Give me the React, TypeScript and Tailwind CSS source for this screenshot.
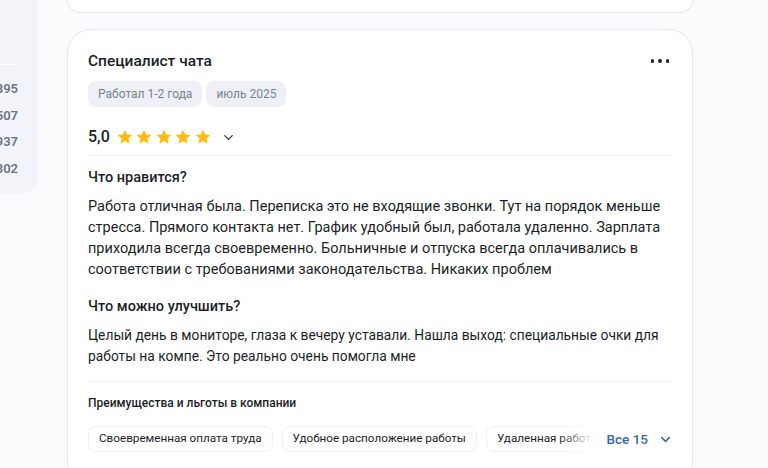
import { ChevronDown } from "lucide-react";

const stats = ["895", "507", "937", "302"];
const benefits = [
  "Своевременная оплата труда",
  "Удобное расположение работы",
  "Удаленная работа",
];

function Star() {
  return (
    <svg width="18" height="18" viewBox="0 0 24 24" className="shrink-0">
      <path
        d="M12 2.2l2.9 6.6 7.1.6-5.4 4.7 1.6 7-6.2-3.7-6.2 3.7 1.6-7L2 9.4l7.1-.6z"
        fill="#ffbc0a"
      />
    </svg>
  );
}

export default function App() {
  return (
    <div
      className="flex w-[768px] h-[468px] overflow-hidden bg-[#fafbfc] text-[#1c1f26]"
      style={{ fontFamily: "Roboto, 'Noto Sans', sans-serif" }}
    >
      {/* left sidebar, cut by the viewport */}
      <div className="w-[38px] shrink-0 self-start h-[194px] bg-[#f3f4f9] rounded-br-[16px] flex flex-col items-end pr-[20px]">
        <div className="mt-[64px] w-full h-px bg-white" />
        <div className="mt-[14px] flex flex-col gap-[7.7px]">
          {stats.map((s) => (
            <span key={s} className="text-[13px] leading-[19px] font-semibold text-[#6b7384]">
              {s}
            </span>
          ))}
        </div>
      </div>

      <div className="ml-[29px] w-[626px] shrink-0 flex flex-col gap-[16px]">
        {/* bottom of previous card */}
        <div className="shrink-0 h-[13px] bg-white border border-t-0 border-[#e5e8f0] rounded-b-[24px]" />

        {/* review card */}
        <div className="shrink-0 bg-white border border-[#e5e8f0] rounded-[24px] pl-[20px] pr-[19px] pt-[19px] pb-8">
          <div className="flex items-center justify-between">
            <h2 className="text-[15.5px] leading-[24px] font-medium">Специалист чата</h2>
            <div className="flex gap-[4px] mr-[4px]">
              <span className="w-[3.5px] h-[3.5px] rounded-full bg-[#1c1f26]" />
              <span className="w-[3.5px] h-[3.5px] rounded-full bg-[#1c1f26]" />
              <span className="w-[3.5px] h-[3.5px] rounded-full bg-[#1c1f26]" />
            </div>
          </div>

          <div className="mt-[8px] flex gap-[4px]">
            <span className="h-[26px] px-[10px] flex items-center rounded-[8px] bg-[#eef0f6] text-[12px] text-[#7a8190]">
              Работал 1-2 года
            </span>
            <span className="h-[26px] px-[10px] flex items-center rounded-[8px] bg-[#eef0f6] text-[12px] text-[#7a8190]">
              июль 2025
            </span>
          </div>

          <div className="mt-[18px] h-[24px] flex items-center">
            <span className="text-[16px] font-medium mr-[6px]">5,0</span>
            <div className="flex gap-[1.5px]">
              <Star />
              <Star />
              <Star />
              <Star />
              <Star />
            </div>
            <ChevronDown size={15} strokeWidth={2.2} className="ml-[9px] text-[#3a3f4a]" />
          </div>

          <div className="mt-[6px] h-px bg-[#eef0f4]" />

          <h3 className="mt-[12px] text-[14.5px] leading-[20px] font-medium">Что нравится?</h3>
          <p className="mt-[8px] text-[14.5px] leading-[21px]">
            Работа отличная была. Переписка это не входящие звонки. Тут на порядок меньше стресса.
            Прямого контакта нет. График удобный был, работала удаленно. Зарплата приходила всегда
            своевременно. Больничные и отпуска всегда оплачивались в соответствии с требованиями
            законодательства. Никаких проблем
          </p>

          <h3 className="mt-[17px] text-[14.5px] leading-[20px] font-medium">Что можно улучшить?</h3>
          <p className="mt-[8px] text-[13.8px] leading-[21px]">
            Целый день в мониторе, глаза к вечеру уставали. Нашла выход: специальные очки для
            работы на компе. Это реально очень помогла мне
          </p>

          <div className="mt-[14px] h-px bg-[#eef0f4]" />

          <h4 className="mt-[12px] text-[12px] leading-[18px] font-medium">
            Преимущества и льготы в компании
          </h4>
          <div className="mt-[14px] flex items-center">
            <div className="relative flex-1 min-w-0 overflow-hidden">
              <div className="flex gap-[9px]">
                {benefits.map((b) => (
                  <span
                    key={b}
                    className="shrink-0 h-[26px] px-[10px] flex items-center rounded-[8px] border border-[#eef0f4] bg-white text-[11.7px] whitespace-nowrap"
                  >
                    {b}
                  </span>
                ))}
              </div>
              <div className="absolute right-0 top-0 h-full w-[36px] bg-gradient-to-r from-transparent to-white" />
            </div>
            <button className="shrink-0 ml-[12px] flex items-center gap-[10px] text-[13.5px] font-medium text-[#3b66b0]">
              Все 15
              <ChevronDown size={15} strokeWidth={2.4} />
            </button>
          </div>
        </div>
      </div>
    </div>
  );
}
